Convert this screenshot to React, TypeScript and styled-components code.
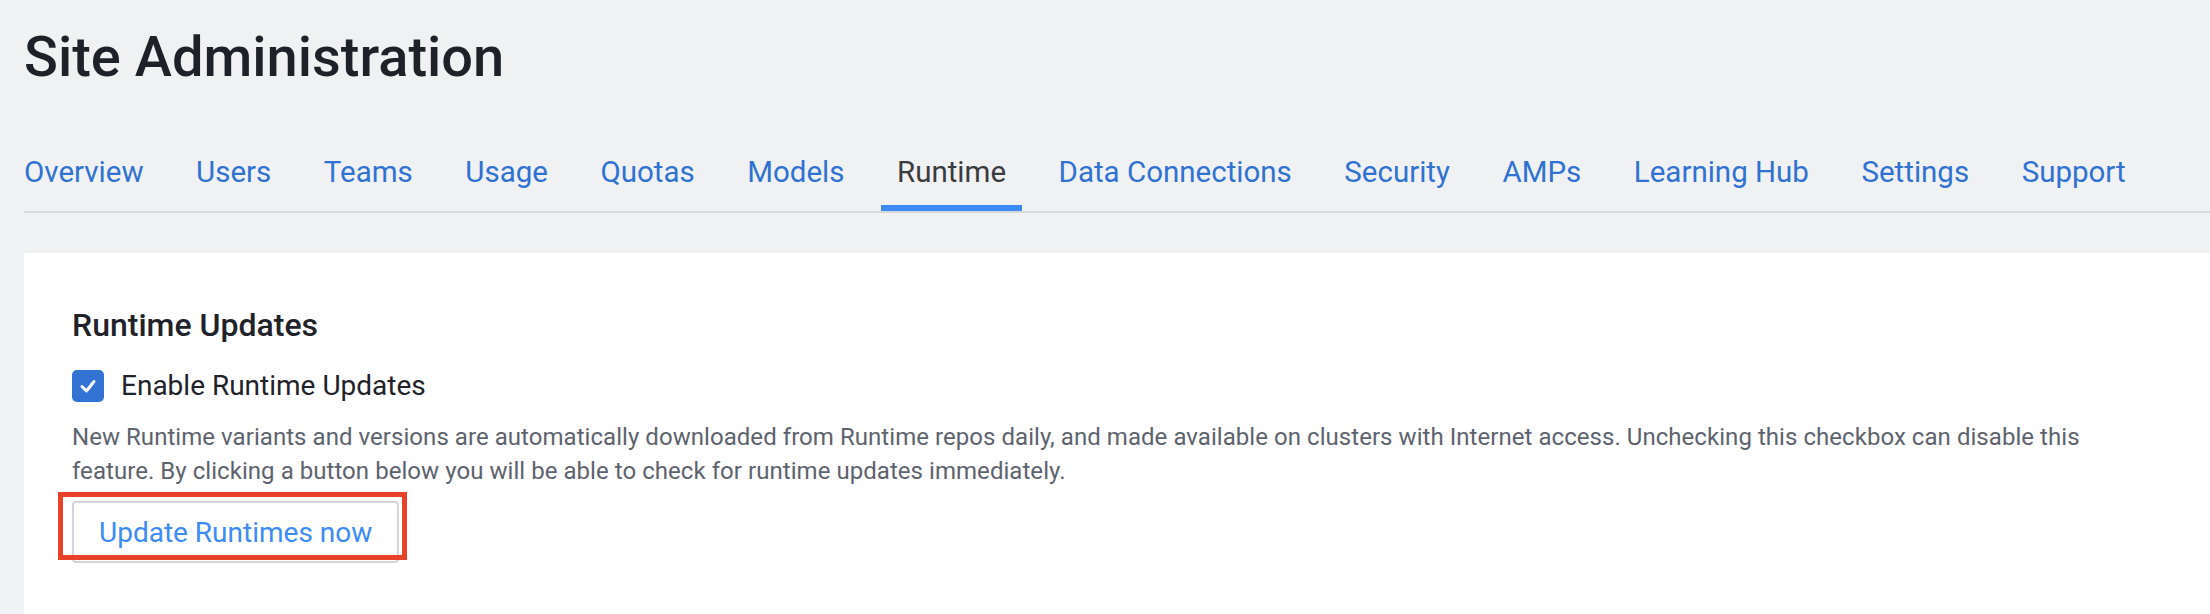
import { useState } from 'react';
import { createGlobalStyle, styled } from 'styled-components';

const tabs = [
  'Overview',
  'Users',
  'Teams',
  'Usage',
  'Quotas',
  'Models',
  'Runtime',
  'Data Connections',
  'Security',
  'AMPs',
  'Learning Hub',
  'Settings',
  'Support',
];

const GlobalStyle = createGlobalStyle`
  html,
  body {
    margin: 0;
    padding: 0;
    background: #f0f1f3;
    font-family: Roboto, 'Noto Sans', 'Liberation Sans', sans-serif;
    overflow: hidden;
  }
`;

const Page = styled.div`
  width: 2210px;
  height: 614px;
  display: flex;
  flex-direction: column;
  background: #f0f1f3;
`;

const Title = styled.h1`
  margin: 0;
  padding: 25px 0 0 24px;
  font-size: 56px;
  line-height: 65px;
  font-weight: 500;
  color: #1e2228;
`;

const TabBar = styled.nav`
  display: flex;
  gap: 52.5px;
  margin: 64px 0 0 24px;
  border-bottom: 2px solid #d7d8db;
`;

const Tab = styled.a<{ $active?: boolean }>`
  position: relative;
  padding-bottom: 21px;
  font-size: 29.5px;
  line-height: 36px;
  color: ${(p) => (p.$active ? '#3a3b3d' : '#2f72d2')};
  cursor: pointer;
  white-space: nowrap;

  &::after {
    content: '';
    display: ${(p) => (p.$active ? 'block' : 'none')};
    position: absolute;
    left: -16px;
    right: -16px;
    bottom: 0;
    height: 6px;
    background: #3c8af5;
  }
`;

const Card = styled.section`
  flex: 1;
  margin: 40px 0 0 24px;
  padding: 52px 48px 0 48px;
  background: #ffffff;
`;

const SectionTitle = styled.h2`
  margin: 0 0 25px;
  font-size: 32px;
  line-height: 40px;
  font-weight: 500;
  color: #1f2329;
`;

const CheckRow = styled.label`
  display: flex;
  align-items: center;
  gap: 17px;
  cursor: pointer;
`;

const Box = styled.span<{ $checked: boolean }>`
  display: flex;
  align-items: center;
  justify-content: center;
  width: 32px;
  height: 32px;
  border-radius: 5px;
  box-sizing: border-box;
  background: ${(p) => (p.$checked ? '#3273d4' : '#ffffff')};
  border: ${(p) => (p.$checked ? 'none' : '2px solid #b8bcc4')};
`;

const CheckText = styled.span`
  font-size: 28px;
  line-height: 32px;
  color: #1f2329;
`;

const Help = styled.p`
  margin: 18px 0 0;
  max-width: 2090px;
  font-size: 24px;
  line-height: 34px;
  letter-spacing: 0.05px;
  color: #5d636d;
`;

const ButtonWrap = styled.div`
  position: relative;
  display: inline-block;
  margin-top: 13px;
`;

const OutlineButton = styled.button`
  height: 62px;
  padding: 0 25px;
  border: 2px solid #d3d5da;
  border-radius: 4px;
  background: #ffffff;
  font-family: inherit;
  font-size: 28px;
  color: #3d8bf6;
  cursor: pointer;
`;

// red callout drawn over the button in the screenshot
const Highlight = styled.span`
  position: absolute;
  left: -14px;
  top: -9px;
  right: -8px;
  bottom: 3px;
  border: 5px solid #e8432a;
  pointer-events: none;
`;

export default function App() {
  const [enabled, setEnabled] = useState(true);

  return (
    <Page>
      <GlobalStyle />
      <Title>Site Administration</Title>
      <TabBar>
        {tabs.map((t) => (
          <Tab key={t} $active={t === 'Runtime'}>
            {t}
          </Tab>
        ))}
      </TabBar>
      <Card>
        <SectionTitle>Runtime Updates</SectionTitle>
        <CheckRow onClick={() => setEnabled(!enabled)}>
          <Box $checked={enabled}>
            {enabled && (
              <svg width="20" height="20" viewBox="0 0 20 20">
                <polyline
                  points="4,10.5 8.5,15 16,5.5"
                  fill="none"
                  stroke="#ffffff"
                  strokeWidth="3"
                  strokeLinecap="round"
                  strokeLinejoin="round"
                />
              </svg>
            )}
          </Box>
          <CheckText>Enable Runtime Updates</CheckText>
        </CheckRow>
        <Help>
          New Runtime variants and versions are automatically downloaded from Runtime repos daily, and made available on
          clusters with Internet access. Unchecking this checkbox can disable this feature. By clicking a button below you
          will be able to check for runtime updates immediately.
        </Help>
        <ButtonWrap>
          <OutlineButton>Update Runtimes now</OutlineButton>
          <Highlight />
        </ButtonWrap>
      </Card>
    </Page>
  );
}
